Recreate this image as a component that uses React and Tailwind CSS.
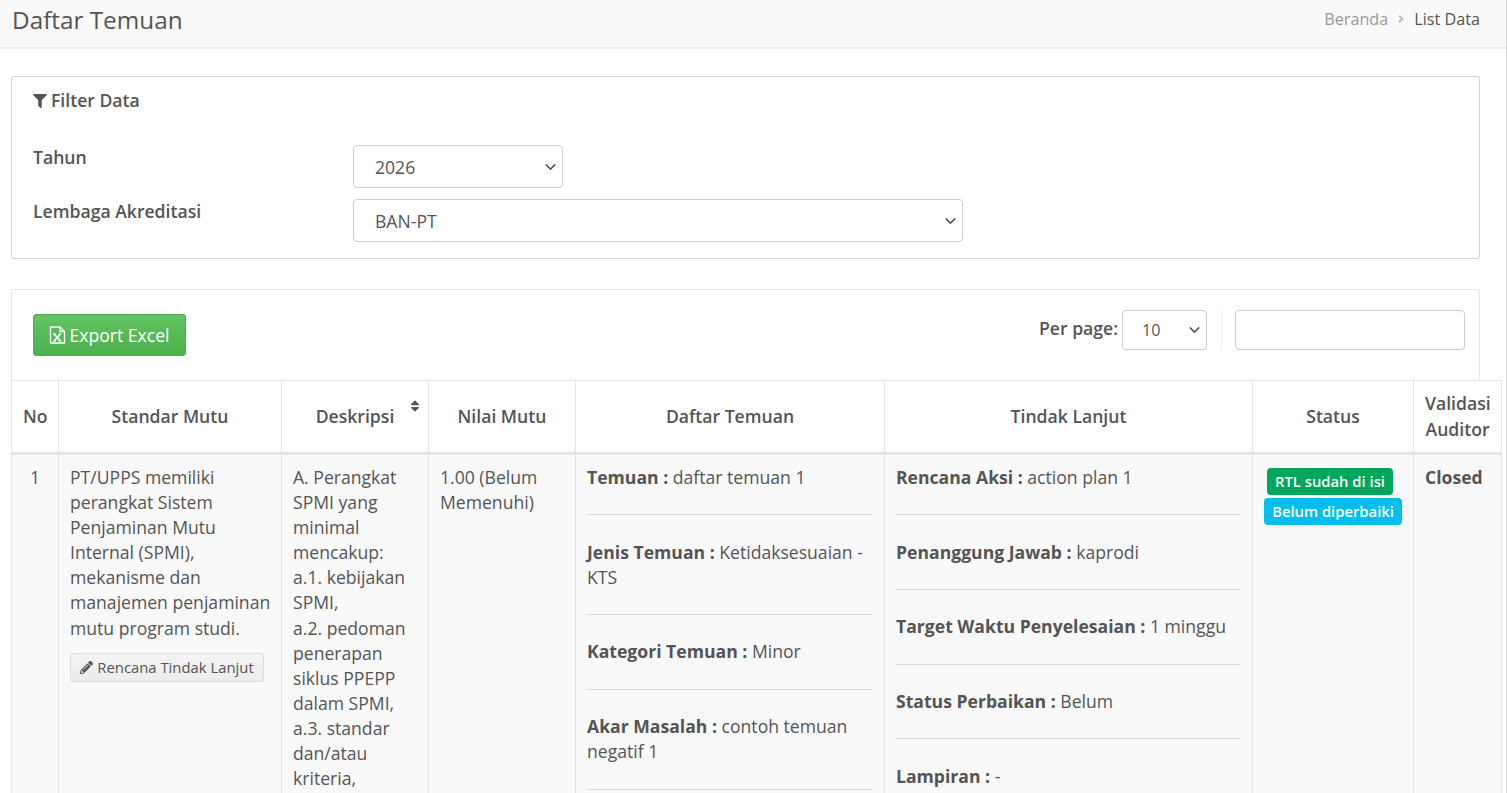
import { ChevronDown } from "lucide-react";
import { FaFilter, FaPencilAlt, FaSort, FaAngleRight } from "react-icons/fa";

const temuan = [
  ["Temuan", "daftar temuan 1"],
  ["Jenis Temuan", "Ketidaksesuaian - KTS"],
  ["Kategori Temuan", "Minor"],
  ["Akar Masalah", "contoh temuan negatif 1"],
  ["Akibat", "-"],
];

const tindakLanjut = [
  ["Rencana Aksi", "action plan 1"],
  ["Penanggung Jawab", "kaprodi"],
  ["Target Waktu Penyelesaian", "1 minggu"],
  ["Status Perbaikan", "Belum"],
  ["Lampiran", "-"],
];

const deskripsi = [
  "A. Perangkat SPMI yang minimal mencakup:",
  "a.1. kebijakan SPMI,",
  "a.2. pedoman penerapan siklus PPEPP dalam SPMI,",
  "a.3. standar dan/atau kriteria,",
  "a.4. formulir",
];

const thClass = "border border-[#e4e4e4] border-b-[3px] px-[11px] py-0 text-center align-middle font-semibold leading-[25.14px]";
const tdClass = "border border-[#e4e4e4] px-[11px] pt-[10px] align-top leading-[25.1px]";

function DetailList({ items }) {
  return (
    <div>
      {items.map(([label, value], i) => (
        <div key={label} className={i > 0 ? "mt-[24.3px] border-t border-[#dcdcdc] pt-[24.3px]" : ""}>
          <b className="font-bold">{label} :</b> {value}
        </div>
      ))}
    </div>
  );
}

function Select({ value, className, selectClass }) {
  return (
    <div className={`relative ${className}`}>
      <select className={`h-full w-full appearance-none rounded-[4px] border border-[#ccc] bg-white ${selectClass}`}>
        <option>{value}</option>
      </select>
      <ChevronDown size={17} strokeWidth={2} className="absolute right-[4px] top-1/2 -translate-y-1/2" />
    </div>
  );
}

function ExcelIcon() {
  return (
    <svg viewBox="0 0 17 18" fill="none" stroke="currentColor" className="mr-[3px] h-[18px] w-[17px]">
      <path d="M1.5 1H11L15.5 5.5V17H1.5Z M11 1V5.5H15.5" strokeWidth="1.4" strokeLinejoin="round" />
      <path d="M5 8L11.5 15M11.5 8L5 15" strokeWidth="1.7" />
      <path d="M4 8H7M9.5 8H12.5M4 15H7M9.5 15H12.5" strokeWidth="1" />
    </svg>
  );
}

export default function App() {
  return (
    <div className="h-[793px] overflow-hidden border-r border-[#d5d5d5] bg-white font-['Open_Sans',sans-serif] text-[17.6px] text-[#555]">
      {/* Header */}
      <header className="flex h-[49px] items-start justify-between border-b-2 border-[#ececec] bg-[#f9f9f9] pl-[12px] pr-[26px]">
        <h1 className="mt-[3px] text-[24.3px] leading-[33px]">Daftar Temuan</h1>
        <div className="mt-[7px] flex items-center text-[16.2px] leading-[24px]">
          <span className="text-[#999]">Beranda</span>
          <FaAngleRight className="mx-[7px] text-[12px] text-[#bbb]" />
          <span>List Data</span>
        </div>
      </header>

      <main className="pl-[11px] pt-[27px] pr-[26px]">
        {/* Filter */}
        <section className="h-[183px] rounded-[2px] border border-[#d4d4d4] px-[21px] pt-[11px]">
          <h2 className="flex items-center font-semibold leading-[25px]">
            <FaFilter className="mr-[4px] text-[14px]" />
            Filter Data
          </h2>
          <div className="mt-[32px] flex items-start">
            <label className="w-[320px] font-semibold leading-[25px]">Tahun</label>
            <Select value="2026" className="h-[43px] w-[210px]" selectClass="pl-[21px] pt-[2px]" />
          </div>
          <div className="mt-[11px] flex items-start">
            <label className="w-[320px] font-semibold leading-[25px]">Lembaga Akreditasi</label>
            <Select value="BAN-PT" className="h-[43px] w-[610px]" selectClass="pl-[21px] pt-[2px]" />
          </div>
        </section>

        {/* Data */}
        <section className="mt-[30px] rounded-[2px] border border-[#e6e6e6] border-b-0">
          <div className="flex h-[90px] items-start justify-between pl-[21px] pr-[14px]">
            <button className="mt-[24px] flex h-[42px] w-[153px] items-center justify-center rounded-[3px] border border-[#4cae4c] bg-gradient-to-b from-[#62c462] to-[#4cb04c] text-white">
              <ExcelIcon />
              Export Excel
            </button>
            <div className="mt-[20px] flex items-start">
              <span className="mt-[6px] mr-[4px] font-semibold leading-[25px]">Per page:</span>
              <Select value="10" className="h-[40px] w-[85px]" selectClass="pl-[19px] text-[16px]" />
              <div className="ml-[14px] mr-[13px] h-[40px] w-px bg-[#eee]" />
              <input className="h-[40px] w-[230px] rounded-[4px] border border-[#ccc] bg-white" />
            </div>
          </div>

          <table className="-ml-px w-[1490px] table-fixed border-collapse bg-white">
            <colgroup>
              <col className="w-[47px]" />
              <col className="w-[223px]" />
              <col className="w-[147px]" />
              <col className="w-[147px]" />
              <col className="w-[309px]" />
              <col className="w-[368px]" />
              <col className="w-[161px]" />
              <col className="w-[88px]" />
            </colgroup>
            <thead>
              <tr className="h-[73px]">
                <th className={thClass}>No</th>
                <th className={thClass}>Standar Mutu</th>
                <th className={`${thClass} relative`}>
                  Deskripsi
                  <FaSort className="absolute right-[6px] top-[18px] text-[14px]" />
                </th>
                <th className={thClass}>Nilai Mutu</th>
                <th className={thClass}>Daftar Temuan</th>
                <th className={thClass}>Tindak Lanjut</th>
                <th className={thClass}>Status</th>
                <th className={thClass}>Validasi Auditor</th>
              </tr>
            </thead>
            <tbody className="bg-[#f9f9f9]">
              <tr>
                <td className={`${tdClass} text-center`}>1</td>
                <td className={`${tdClass} pr-[6px]`}>
                  PT/UPPS memiliki perangkat Sistem Penjaminan Mutu Internal (SPMI), mekanisme dan manajemen penjaminan mutu program studi.
                  <button className="mt-[12px] flex h-[29px] w-[194px] items-center justify-center rounded-[3px] border border-[#ddd] bg-gradient-to-b from-[#f4f4f4] to-[#ececec] text-[14.85px]">
                    <FaPencilAlt className="mr-[4px] text-[13px]" />
                    Rencana Tindak Lanjut
                  </button>
                </td>
                <td className={tdClass}>
                  {deskripsi.map((line) => (
                    <div key={line}>{line}</div>
                  ))}
                </td>
                <td className={tdClass}>1.00 (Belum Memenuhi)</td>
                <td className={tdClass}>
                  <DetailList items={temuan} />
                </td>
                <td className={tdClass}>
                  <DetailList items={tindakLanjut} />
                </td>
                <td className={tdClass}>
                  <div className="mt-[3px] flex flex-col items-center gap-[3px]">
                    <span className="mr-[6px] h-[27px] rounded-[4px] bg-[#00a65a] px-[8px] text-[14.8px] font-semibold leading-[27px] text-white">RTL sudah di isi</span>
                    <span className="h-[27px] rounded-[4px] bg-[#00bfea] px-[8px] text-[14.8px] font-semibold leading-[27px] text-white">Belum diperbaiki</span>
                  </div>
                </td>
                <td className={`${tdClass} font-bold`}>Closed</td>
              </tr>
            </tbody>
          </table>
        </section>
      </main>
    </div>
  );
}
